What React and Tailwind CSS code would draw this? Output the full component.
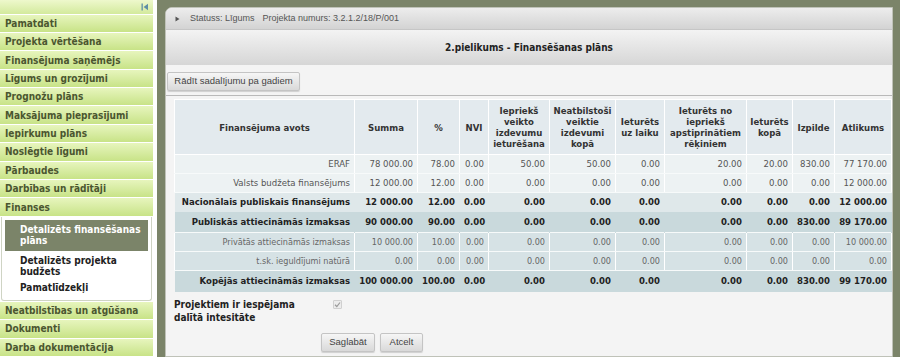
import React from 'react';

const menuTop = [
    'Pamatdati',
    'Projekta vērtēšana',
    'Finansējuma saņēmējs',
    'Līgums un grozījumi',
    'Prognožu plāns',
    'Maksājuma pieprasījumi',
    'Iepirkumu plāns',
    'Noslēgtie līgumi',
    'Pārbaudes',
    'Darbības un rādītāji',
    'Finanses',
];

const menuBottom = ['Neatbilstības un atgūšana', 'Dokumenti', 'Darba dokumentācija'];

const subMenu = [
    { label: 'Detalizēts finansēšanas plāns', active: true },
    { label: 'Detalizēts projekta budžets' },
    { label: 'Pamatlīdzekļi' },
];

const headers = [
    'Finansējuma avots',
    'Summa',
    '%',
    'NVI',
    'Iepriekš veikto izdevumu ieturēšana',
    'Neatbilstoši veiktie izdevumi kopā',
    'Ieturēts uz laiku',
    'Ieturēts no iepriekš apstiprinātiem rēķiniem',
    'Ieturēts kopā',
    'Izpilde',
    'Atlikums',
];

const colWidths = [180, 63, 42, 29, 61, 66, 49, 82, 46, 42, 57];

// type: plain | sub (bold) | total (bold, darker) | minor (small gray)
const rows = [
    { type: 'plain', cells: ['ERAF', '78 000.00', '78.00', '0.00', '50.00', '50.00', '0.00', '20.00', '20.00', '830.00', '77 170.00'] },
    { type: 'plain', cells: ['Valsts budžeta finansējums', '12 000.00', '12.00', '0.00', '0.00', '0.00', '0.00', '0.00', '0.00', '0.00', '12 000.00'] },
    { type: 'sub', cells: ['Nacionālais publiskais finansējums', '12 000.00', '12.00', '0.00', '0.00', '0.00', '0.00', '0.00', '0.00', '0.00', '12 000.00'] },
    { type: 'total', cells: ['Publiskās attiecināmās izmaksas', '90 000.00', '90.00', '0.00', '0.00', '0.00', '0.00', '0.00', '0.00', '830.00', '89 170.00'] },
    { type: 'minor', cells: ['Privātās attiecināmās izmaksas', '10 000.00', '10.00', '0.00', '0.00', '0.00', '0.00', '0.00', '0.00', '0.00', '10 000.00'] },
    { type: 'minor', cells: ['t.sk. ieguldījumi natūrā', '0.00', '0.00', '0.00', '0.00', '0.00', '0.00', '0.00', '0.00', '0.00', '0.00'] },
    { type: 'total', cells: ['Kopējās attiecināmās izmaksas', '100 000.00', '100.00', '0.00', '0.00', '0.00', '0.00', '0.00', '0.00', '830.00', '99 170.00'] },
];

const rowStyle = {
    plain: 'h-[19px] bg-[#edf2f3] text-[#555] font-normal',
    sub: 'h-[19px] bg-[#dfe8ea] text-[#222] font-bold',
    total: 'h-[21px] bg-[#c9d9dc] text-[#222] font-bold',
    minor: 'h-[19px] bg-[#d6e2e5] text-[#666] font-normal text-[9px]',
};

const verdana = { fontFamily: '"DejaVu Sans Condensed", "DejaVu Sans", Verdana, sans-serif' };
const arial = { fontFamily: '"Liberation Sans", Arial, sans-serif' };

const MenuItem = ({ label }) => (
    <div className="h-[18px] mb-px flex items-center pl-[5px] bg-gradient-to-b from-[#e7f5bd] to-[#c8e387] text-[10px] font-bold text-[#4b5630] whitespace-nowrap">
        {label}
    </div>
);

const GrayButton = ({ children, className = '' }) => (
    <button
        className={`h-[19px] px-[4px] whitespace-nowrap border border-[#c4c4c4] rounded-[2px] bg-gradient-to-b from-[#f6f6f6] to-[#d9d9d9] text-[9.5px] text-[#444] shadow-[0_1px_1px_rgba(0,0,0,0.15)] ${className}`}
        style={arial}
    >
        {children}
    </button>
);

export default function App() {
    return (
        <div className="flex w-[900px] h-[357px] overflow-hidden bg-white" style={verdana}>
            {/* kreisā izvēlne */}
            <aside className="w-[153px] shrink-0 flex flex-col">
                <div className="h-[14px] mb-px flex items-center justify-end pr-[4px] bg-gradient-to-b from-[#eef8cc] to-[#d3ea9c]">
                    <svg width="8" height="8" viewBox="0 0 8 8">
                        <rect x="0.5" y="0.5" width="1.3" height="7" fill="#5f8fa6" />
                        <path d="M7 0.8 L2.6 4 L7 7.2 Z" fill="#5f8fa6" />
                    </svg>
                </div>
                {menuTop.map((m) => (
                    <MenuItem key={m} label={m} />
                ))}
                <div className="mx-px mb-px border border-t-0 border-[#cfd4c4] rounded-b-[3px] bg-white pt-[3px] pb-[4px] px-[3px]">
                    {subMenu.map((s) => (
                        <div
                            key={s.label}
                            className={`pl-[15px] pr-[4px] py-[2px] text-[10px] font-bold leading-[11px] ${
                                s.active ? 'bg-[#7b8469] text-white mb-[2px] pt-[4px] pb-[5px]' : 'text-[#222] mb-[1px]'
                            }`}
                        >
                            {s.label}
                        </div>
                    ))}
                </div>
                {menuBottom.map((m) => (
                    <MenuItem key={m} label={m} />
                ))}
            </aside>

            {/* labā puse */}
            <div className="ml-[4px] flex-1 min-w-0 bg-[#7b8469] pl-[8px] pt-[7px] pr-[7px]">
                <div className="h-full rounded-tl-[7px] border border-[#bfc2b8] bg-[#f4f4f4] overflow-hidden flex flex-col">
                    <div
                        className="h-[22px] shrink-0 flex items-center pl-[9px] bg-gradient-to-b from-[#ededed] to-[#d3d3d3] border-b border-[#c6c6c6] text-[9px] text-[#555]"
                        style={arial}
                    >
                        <svg width="5" height="6" viewBox="0 0 5 6" className="mr-[10px]">
                            <path d="M0.5 0.5 L4.5 3 L0.5 5.5 Z" fill="#555" />
                        </svg>
                        <span>Statuss: Līgums</span>
                        <span className="ml-[8px]">Projekta numurs: 3.2.1.2/18/P/001</span>
                    </div>
                    <div className="h-[35px] shrink-0 flex items-center justify-center bg-gradient-to-b from-[#f3f3f3] to-[#d6d6d6] text-[10px] font-bold text-[#222]">
                        2.pielikums - Finansēšanas plāns
                    </div>
                    <div className="flex pt-[7px] pl-px">
                        <GrayButton className="w-[133px] h-[18px]">Rādīt sadalījumu pa gadiem</GrayButton>
                    </div>
                    <div className="mt-[4px] border-t border-[#b9b9b9]" />
                    <div className="pt-[3px] pl-[8px]">
                        <table className="table-fixed border-collapse w-[717px] text-[9.5px]">
                            <colgroup>
                                {colWidths.map((w, i) => (
                                    <col key={i} style={{ width: w }} />
                                ))}
                            </colgroup>
                            <thead>
                                <tr className="h-[55px] bg-[#e3eaee]">
                                    {headers.map((h) => (
                                        <th
                                            key={h}
                                            className="border border-white px-[2px] text-center align-middle font-bold text-[#333] leading-[11px]"
                                        >
                                            {h}
                                        </th>
                                    ))}
                                </tr>
                            </thead>
                            <tbody>
                                {rows.map((r, ri) => (
                                    <tr key={ri} className={rowStyle[r.type]}>
                                        {r.cells.map((c, ci) => (
                                            <td
                                                key={ci}
                                                className={`px-[4px] py-0 leading-[12px] text-right whitespace-nowrap border-x ${
                                                    r.type === 'minor' || r.type === 'plain'
                                                        ? 'border-white border-y border-y-[#f7fafa]'
                                                        : 'border-transparent'
                                                }`}
                                            >
                                                {c}
                                            </td>
                                        ))}
                                    </tr>
                                ))}
                            </tbody>
                        </table>
                    </div>
                    <div className="flex items-start pl-[8px] pt-[6px]">
                        <div className="w-[150px] text-[10px] font-bold text-[#222] leading-[13px]">
                            Projektiem ir iespējama dalītā intesitāte
                        </div>
                        <div className="mt-[2px] ml-[9px] w-[9px] h-[9px] border border-[#d0d0d0] bg-[#ececec] rounded-[1px] flex items-center justify-center">
                            <svg width="7" height="7" viewBox="0 0 7 7">
                                <path d="M1 3.8 L2.8 5.5 L6 1.5" stroke="#9a9a9a" strokeWidth="1.2" fill="none" />
                            </svg>
                        </div>
                    </div>
                    <div className="flex gap-[5px] pl-[155px] pt-[9px]">
                        <GrayButton className="w-[54px]">Saglabāt</GrayButton>
                        <GrayButton className="w-[43px]">Atcelt</GrayButton>
                    </div>
                </div>
            </div>
        </div>
    );
}
